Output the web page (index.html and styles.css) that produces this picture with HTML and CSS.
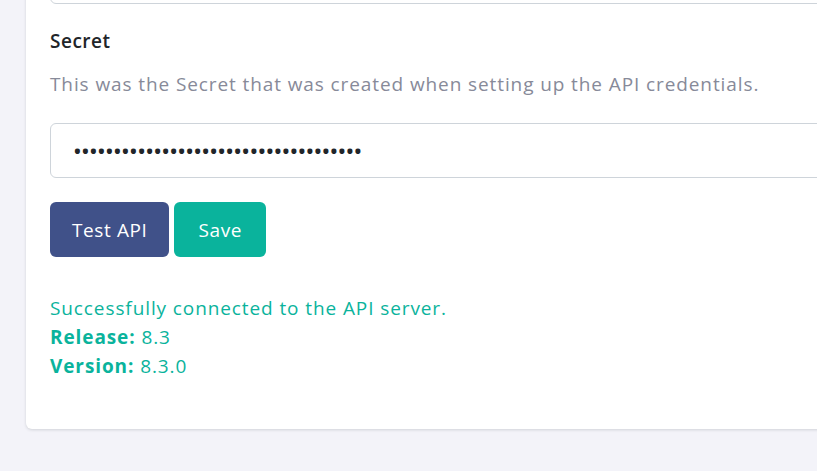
FILE: index.html
```html
<!DOCTYPE html>
<html lang="en">
<head>
<meta charset="utf-8">
<title>API Settings</title>
<link rel="stylesheet" href="styles.css">
</head>
<body>
<div class="page">
  <div class="card">
    <div class="field field-prev">
      <input class="form-control" type="text" value="" aria-label="Key">
    </div>
    <div class="field">
      <label class="form-label" for="secret">Secret</label>
      <p class="form-help">This was the Secret that was created when setting up the API credentials.</p>
      <input id="secret" class="form-control secret" type="password" value="000000000000000000000000000000000000">
    </div>
    <div class="actions">
      <button class="btn btn-primary" type="button">Test API</button>
      <button class="btn btn-success" type="button">Save</button>
    </div>
    <div class="result">
      <div>Successfully connected to the API server.</div>
      <div><strong>Release:</strong> 8.3</div>
      <div><strong>Version:</strong> 8.3.0</div>
    </div>
  </div>
</div>
</body>
</html>
```

FILE: styles.css
```css
html, body {
  margin: 0;
  padding: 0;
}
body {
  background: #f3f3f9;
  font-family: "Open Sans", "Liberation Sans", sans-serif;
  font-size: 19px;
  letter-spacing: 0.9px;
  color: #212529;
  overflow: hidden;
  width: 817px;
  height: 471px;
}
.page {
  margin-top: -63px;
  padding-left: 26px;
}
.card {
  width: 1100px;
  background: #fff;
  border-radius: 6px;
  box-shadow: 0 1px 3px rgba(56, 65, 74, 0.18);
  padding: 12px 24px 48px 24px;
  box-sizing: border-box;
}
.form-control {
  display: block;
  width: 100%;
  box-sizing: border-box;
  height: 55px;
  border: 1px solid #ced4da;
  border-radius: 6px;
  background: #fff;
  font-family: inherit;
  font-size: 19px;
  padding: 0 23px;
  color: #212529;
  outline: none;
}
.field-prev {
  margin-bottom: 24px;
}
.form-label {
  display: block;
  font-weight: 600;
  letter-spacing: 0.5px;
  line-height: 27px;
  color: #212529;
}
.form-help {
  margin: 16px 0 25px 0;
  line-height: 27px;
  color: #878a99;
}
.secret {
  letter-spacing: 1.25px;
  font-size: 18px;
  font-weight: 700;
}
.actions {
  display: flex;
  gap: 5px;
  margin-top: 24px;
}
.btn {
  height: 55px;
  border: none;
  border-radius: 6px;
  padding: 0 22px;
  font-family: inherit;
  font-size: 19px;
  font-weight: 500;
  letter-spacing: 0.6px;
  color: #fff;
  cursor: pointer;
}
.btn-primary {
  background: #405189;
}
.btn-success {
  background: #0ab39c;
  padding: 0 24px;
}
.result {
  margin-top: 37px;
  color: #0ab39c;
  line-height: 29px;
}
.result strong {
  font-weight: 700;
}
```
